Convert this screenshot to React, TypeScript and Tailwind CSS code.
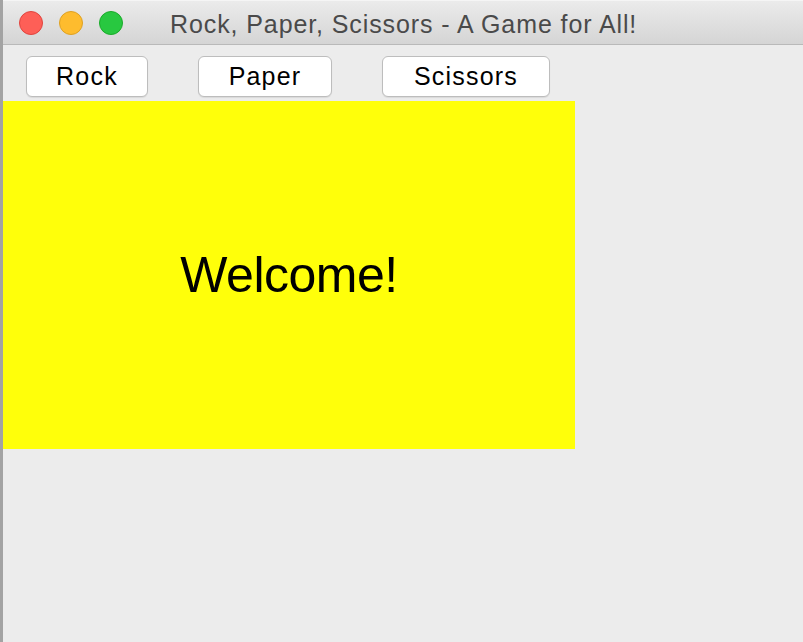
import React from 'react';

const font = { fontFamily: '"Liberation Sans", Arial, sans-serif' };

function TrafficLights() {
  return (
    <div className="flex items-center gap-[16px] pl-[16px]">
      <span className="h-[24px] w-[24px] rounded-full border border-[#e0443e] bg-[#fe5f57]" />
      <span className="h-[24px] w-[24px] rounded-full border border-[#dea123] bg-[#febc2e]" />
      <span className="h-[24px] w-[24px] rounded-full border border-[#1aab29] bg-[#28c840]" />
    </div>
  );
}

function MacButton({ label, width }: { label: string; width: string }) {
  return (
    <button
      className={`${width} h-[41px] rounded-[6px] border border-[#bdbdbd] bg-white text-[25px] leading-none tracking-[1.2px] text-black shadow-[0_1px_1px_rgba(0,0,0,0.08)]`}
      style={font}
    >
      {label}
    </button>
  );
}

export default function App() {
  return (
    <div className="h-[642px] w-[803px] overflow-hidden bg-[#ececec]" style={font}>
      <div className="flex h-full w-full flex-col border-l-[3px] border-[#a3a3a3]">
        {/* title bar */}
        <div className="relative flex h-[45px] shrink-0 items-center border-b border-[#b9b9b9] border-t border-t-[#f5f5f5] bg-gradient-to-b from-[#ebebeb] to-[#d5d5d5]">
          <TrafficLights />
          <div className="absolute left-[167px] top-[11px] text-[25px] leading-none tracking-[0.9px] text-[#4a4a4a]">
            Rock, Paper, Scissors - A Game for All!
          </div>
        </div>

        {/* button row */}
        <div className="flex gap-[50px] pl-[23px] pt-[11px]">
          <MacButton label="Rock" width="w-[122px]" />
          <MacButton label="Paper" width="w-[134px]" />
          <MacButton label="Scissors" width="w-[168px]" />
        </div>

        {/* message panel */}
        <div className="mt-[4px] flex h-[348px] w-[572px] items-center justify-center bg-[#ffff0a]">
          <span className="text-[50px] leading-none tracking-[-0.5px] text-black">Welcome!</span>
        </div>
      </div>
    </div>
  );
}
